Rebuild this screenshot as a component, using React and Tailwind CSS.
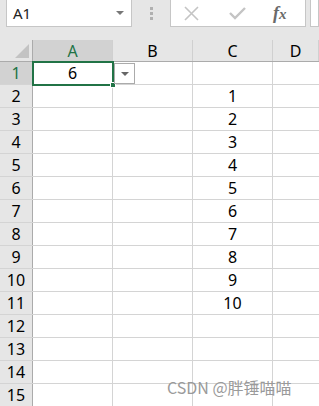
import React from "react";

const cols = [
  { name: "A", w: "w-[80px]" },
  { name: "B", w: "w-[80px]" },
  { name: "C", w: "w-[80px]" },
  { name: "D", w: "flex-1" },
];

const rows = Array.from({ length: 15 }, (_, i) => i + 1);

const App = () => {
  return (
    <div className="w-[319px] h-[406px] overflow-hidden bg-[#e6e6e6] font-['Noto_Sans','Noto_Sans_CJK_SC',sans-serif] text-[#000]">
      {/* Formula bar */}
      <div className="h-[40px] flex items-start">
        <div className="ml-[6px] mt-[-1px] w-[126px] h-[28px] bg-white border border-[#c6c6c6] flex items-center justify-between pl-[6px] pr-[7px]">
          <span className="text-[15px] leading-none text-[#222]">A1</span>
          <span className="w-0 h-0 border-l-[4px] border-r-[4px] border-t-[4px] border-l-transparent border-r-transparent border-t-[#777]" />
        </div>
        <div className="w-[38px] h-[27px] flex flex-col items-center justify-center gap-[2px]">
          <span className="w-[3px] h-[3px] bg-[#b0b0b0]" />
          <span className="w-[3px] h-[3px] bg-[#b0b0b0]" />
          <span className="w-[3px] h-[3px] bg-[#b0b0b0]" />
        </div>
        <div className="mt-[-1px] w-[136px] h-[28px] bg-white border border-[#c6c6c6] flex items-center">
          <svg width="15" height="15" viewBox="0 0 15 15" className="ml-[13px]">
            <path d="M1 1 L14 14 M14 1 L1 14" stroke="#c4c4c4" strokeWidth="1.6" fill="none" />
          </svg>
          <svg width="17" height="14" viewBox="0 0 17 14" className="ml-[30px]">
            <path d="M1 7 L6 12 L16 2" stroke="#c4c4c4" strokeWidth="2.4" fill="none" />
          </svg>
          <span className="ml-[27px] text-[18px] italic font-bold font-['Liberation_Serif',serif] text-[#6a6a6a] leading-none">
            f<span className="text-[15px]">x</span>
          </span>
        </div>
        <div className="ml-[4px] mt-[-1px] flex-1 h-[28px] bg-white border border-[#c6c6c6]" />
      </div>

      {/* Sheet */}
      <div className="relative bg-white">
        {/* Column headers */}
        <div className="flex h-[22px] bg-[#e6e6e6] border-b border-[#ababab]">
          <div className="w-[33px] relative border-r border-[#ababab]">
            <div className="absolute right-[3px] bottom-[3px] w-0 h-0 border-b-[14px] border-l-[14px] border-b-[#c3c3c3] border-l-transparent" />
          </div>
          {cols.map((c) => (
            <div
              key={c.name}
              className={`${c.w} flex items-center justify-center text-[16px] border-r border-[#d0d0d0] ${
                c.name === "A" ? "bg-[#d2d2d2] text-[#217346] border-[#ababab]" : ""
              }`}
            >
              {c.name}
            </div>
          ))}
        </div>

        {rows.map((r) => (
          <div key={r} className="flex h-[23px] border-b border-[#d4d4d4]">
            <div
              className={`w-[33px] flex items-center justify-center text-[16px] border-r border-[#ababab] ${
                r === 1 ? "bg-[#d2d2d2] text-[#217346]" : "bg-[#e6e6e6]"
              }`}
            >
              {r}
            </div>
            <div className="w-[80px] flex items-center justify-center text-[16px] border-r border-[#d4d4d4]">
              {r === 1 ? "6" : ""}
            </div>
            <div className="w-[80px] border-r border-[#d4d4d4]" />
            <div className="w-[80px] flex items-center justify-center text-[16px] border-r border-[#d4d4d4]">
              {r >= 2 && r <= 11 ? r - 1 : ""}
            </div>
            <div className="flex-1" />
          </div>
        ))}

        {/* Selected cell A1 */}
        <div className="absolute left-[32px] top-[21px] w-[82px] h-[25px] border-2 border-[#217346]" />
        <div className="absolute left-[110px] top-[42px] w-[6px] h-[6px] bg-[#217346] border border-white" />
        {/* Dropdown button */}
        <div className="absolute left-[114px] top-[23px] w-[21px] h-[21px] bg-white border border-[#ababab] flex items-center justify-center">
          <span className="w-0 h-0 border-l-[4px] border-r-[4px] border-t-[4px] border-l-transparent border-r-transparent border-t-[#666]" />
        </div>

        {/* Watermark */}
        <div className="absolute left-[167px] top-[335px] text-[16px] text-[#9a9a9a] font-['Noto_Sans_CJK_SC',sans-serif]">
          CSDN @胖锤喵喵
        </div>
      </div>
    </div>
  );
};

export default App;
